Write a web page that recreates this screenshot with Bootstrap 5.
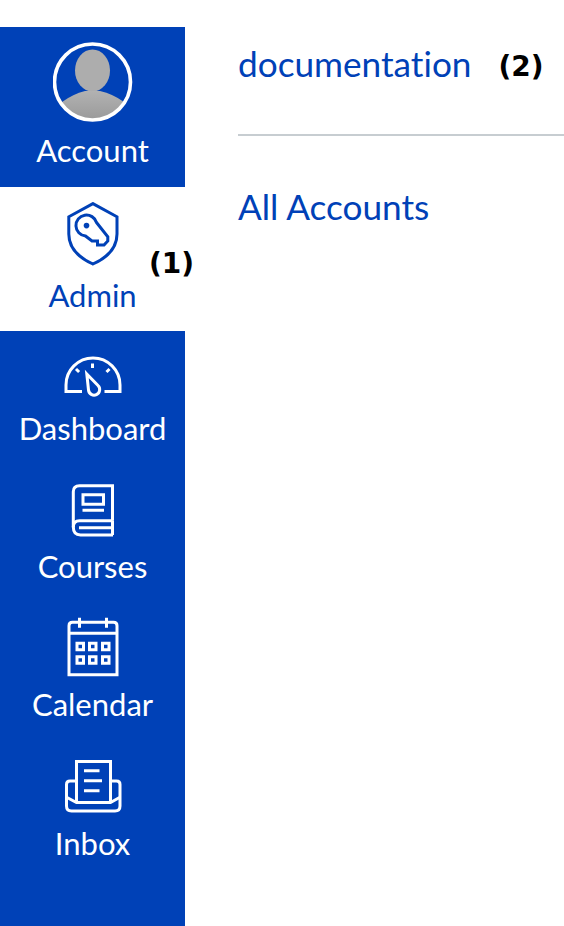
<!DOCTYPE html>
<html lang="en">
<head>
<meta charset="utf-8">
<title>Admin</title>
<link href="https://cdn.jsdelivr.net/npm/bootstrap@5.3.2/dist/css/bootstrap.min.css" rel="stylesheet">
<script src="https://cdn.jsdelivr.net/npm/bootstrap@5.3.2/dist/js/bootstrap.bundle.min.js"></script>
<style>
body { font-family: "Lato", "Liberation Sans", sans-serif; font-variant-ligatures: none; background: #fff; overflow: hidden; }
#page-wrap { height: 926px; padding-top: 27px; }
#side-menu { width: 185px; background: #0041b7; flex-shrink: 0; }
.menu-tile { color: #fff; text-decoration: none; font-size: 31px; line-height: 40px; height: 138.67px; padding-top: 5px; }
.menu-tile:hover { color: #fff; }
.menu-tile svg { display: block; width: 72px; height: 72px; fill: none; stroke: currentColor; stroke-width: 3; }
.tile-account { height: 160px; padding-top: 15px; }
.tile-account svg { width: 80px; height: 80px; margin-bottom: 8px; }
.tile-admin { height: 144px; padding-top: 15px; background: #fff; color: #0041b7; position: relative; }
.tile-admin:hover { color: #0041b7; }
.tile-admin svg { height: 66px; margin-bottom: 7px; }
.tile-short { height: 137.67px; }
.note-num { font-family: "DejaVu Sans", sans-serif; font-weight: 700; font-size: 28px; color: #000; line-height: 34px; }
.tile-admin .note-num { position: absolute; left: 149px; top: 60px; }
#main-col { padding-left: 53px; min-width: 0; }
.main-link { color: #0041b7; text-decoration: none; font-size: 35.2px; line-height: 44px; }
.main-link:hover { color: #0041b7; }
.crumb-row { padding-top: 14px; padding-bottom: 49px; border-bottom: 2px solid #c7cdd1; }
.crumb-row .note-num { margin-left: 27px; padding-top: 8px; }
.accounts-row { padding-top: 48px; }
</style>
</head>
<body>
<div id="page-wrap" class="d-flex">
	<nav id="side-menu" class="d-flex flex-column">
		<a class="menu-tile tile-account d-flex flex-column align-items-center" href="#">
			<svg viewBox="0 0 80 80">
				<defs>
					<clipPath id="avatar-clip"><circle cx="39.5" cy="40" r="37"/></clipPath>
					<linearGradient id="avatar-grey" x1="0" y1="0" x2="0" y2="1"><stop offset="0" stop-color="#b2b2b2"/><stop offset="1" stop-color="#989898"/></linearGradient>
				</defs>
				<g clip-path="url(#avatar-clip)" stroke="none">
					<ellipse cx="39.5" cy="28.5" rx="17.5" ry="21" fill="#adadad"/>
					<path d="M9 60 Q20 52 32 49 L47 49 Q60 52 71 60 V80 H9 Z" fill="url(#avatar-grey)"/>
				</g>
				<circle cx="39.5" cy="40" r="38" stroke="#fff" stroke-width="3.6"/>
			</svg>
			Account
		</a>
		<a class="menu-tile tile-admin d-flex flex-column align-items-center" href="#">
			<svg viewBox="56.5 202 72 66">
				<path d="M92.4 203.6 L116.5 216.8 V234 C116.5 248 106 258 92.4 264 C79 258 68.3 248 68.3 234 V216.8 Z"/>
				<path d="M96 222.5 L107.3 236.7 V241 L103.5 245 H97 V241 H91.5 L85 236 A10.5 10.5 0 1 1 96 222.5 Z"/>
				<circle cx="86" cy="225.6" r="2.8" fill="currentColor" stroke="none"/>
			</svg>
			Admin
			<span class="note-num">(1)</span>
		</a>
		<a class="menu-tile tile-short d-flex flex-column align-items-center" href="#">
			<svg viewBox="56.5 336 72 72">
				<path d="M81.5 391.5 H65.5 V385 A27 27 0 0 1 119.5 385 V391.5 H104"/>
				<path d="M92 363.5 V368 M75.5 369 L78.6 372 M109 369 L106 372"/>
				<path d="M86.3 374 L97.5 385.5 A5.6 5.6 0 1 1 88 390 Z"/>
			</svg>
			Dashboard
		</a>
		<a class="menu-tile d-flex flex-column align-items-center" href="#">
			<svg viewBox="56.5 473.67 72 72">
				<path d="M112 520.5 V485.5 H79 Q72.8 485.5 72.8 491.5 V526.5 Q72.8 534.7 80 534.7 H112.5"/>
				<path d="M112 520.5 H79 Q72.8 520.5 72.8 527 M78.5 527.3 H111.5 M112 520.5 V534.7"/>
				<path d="M82.5 494.5 H103 V504 H82.5 Z M82 510 H103.5"/>
			</svg>
			Courses
		</a>
		<a class="menu-tile d-flex flex-column align-items-center" href="#">
			<svg viewBox="56.5 612.33 72 72">
				<path d="M72 622.5 Q68.5 622.5 68.5 626 V675 H116.5 V626 Q116.5 622.5 113 622.5 Z"/>
				<path d="M79 618 V628 M106 618 V628 M68.5 633.5 H116.5"/>
				<path d="M76.5 643.5 H83 V650 H76.5 Z M89 643.5 H95.5 V650 H89 Z M102 643.5 H108.5 V650 H102 Z M76.5 657 H83 V663.5 H76.5 Z M89 657 H95.5 V663.5 H89 Z M102 657 H108.5 V663.5 H102 Z"/>
			</svg>
			Calendar
		</a>
		<a class="menu-tile d-flex flex-column align-items-center" href="#">
			<svg viewBox="56.5 751 72 72">
				<path d="M76 802 V761.5 H110 V802"/>
				<path d="M83.5 770.7 H99 M83.5 780.7 H101.5 M83.5 790.7 H99"/>
				<path d="M76 781 H69.5 Q66 781 66 784.5 V806 Q66 811 71 811 H114.5 Q119.5 811 119.5 806 V784.5 Q119.5 781 116 781 H110"/>
				<path d="M66.5 797.5 L76 802.5 H110 L119 797.5"/>
			</svg>
			Inbox
		</a>
	</nav>
	<main id="main-col" class="flex-grow-1">
		<div class="crumb-row d-flex align-items-center">
			<a class="main-link" href="#">documentation</a>
			<span class="note-num">(2)</span>
		</div>
		<div class="accounts-row">
			<a class="main-link" href="#">All Accounts</a>
		</div>
	</main>
</div>
</body>
</html>
